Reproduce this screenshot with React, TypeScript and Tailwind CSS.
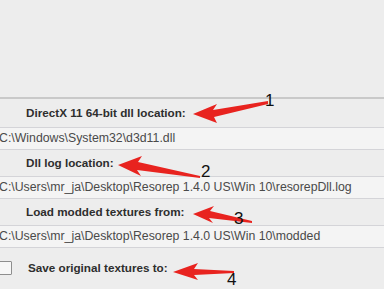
import React from 'react'

const FONT = { fontFamily: '"Liberation Sans", Arial, sans-serif' }

function Label({ text, check, tall }: { text: string; check?: boolean; tall?: boolean }) {
  return (
    <div className={`flex items-center ${check ? 'h-[40px]' : tall ? 'h-[28px]' : 'h-[26px]'}`}>
      {check ? (
        <div className="ml-[-2px] w-[14px] h-[14px] border border-[#8e8e8e] bg-[#f7f7f7] mr-[16px] rounded-[1px]" />
      ) : (
        <div className="w-[26px]" />
      )}
      <span className="text-[11.7px] font-bold text-[#2e2e2e]">{text}</span>
    </div>
  )
}

function Field({ value }: { value: string }) {
  return (
    <div className="h-[23px] flex items-center border-y border-[#d4d4d8] bg-[#f4f4f4] overflow-hidden">
      <span className="ml-[-1px] text-[12.3px] text-[#4a4a4a] whitespace-nowrap">{value}</span>
    </div>
  )
}

export default function App() {
  return (
    <div className="relative w-[384px] h-[289px] overflow-hidden bg-[#ededed]" style={FONT}>
      <div className="h-[97px]" />
      <div className="border-t-2 border-[#c9c9c9]">
        <Label text="DirectX 11 64-bit dll location:" tall />
        <Field value="C:\Windows\System32\d3d11.dll" />
        <Label text="Dll log location:" />
        <Field value="C:\Users\mr_ja\Desktop\Resorep 1.4.0 US\Win 10\resorepDll.log" />
        <Label text="Load modded textures from:" />
        <Field value="C:\Users\mr_ja\Desktop\Resorep 1.4.0 US\Win 10\modded" />
        <Label text="Save original textures to:" check />
      </div>

      {/* annotation arrows */}
      <svg className="absolute inset-0" width="384" height="289" viewBox="0 0 384 289">
        <g fill="#e8231f">
          <polygon points="193,114 217,104 213,110 268,101 268,104 214,117 217,123" />
          <polygon points="118,165 142,156 138,162 200,176 200,178 137,170 141,176" />
          <polygon points="193,214 214,206 210,211 252,221 252,223 209,218 213,223" />
          <polygon points="173,272 198,263 194,269 234,271 234,273 194,275 198,280" />
        </g>
        <g fill="#111" fontSize="17" style={FONT}>
          <text x="265" y="106">1</text>
          <text x="201" y="177">2</text>
          <text x="234" y="224">3</text>
          <text x="227" y="285">4</text>
        </g>
      </svg>
    </div>
  )
}
